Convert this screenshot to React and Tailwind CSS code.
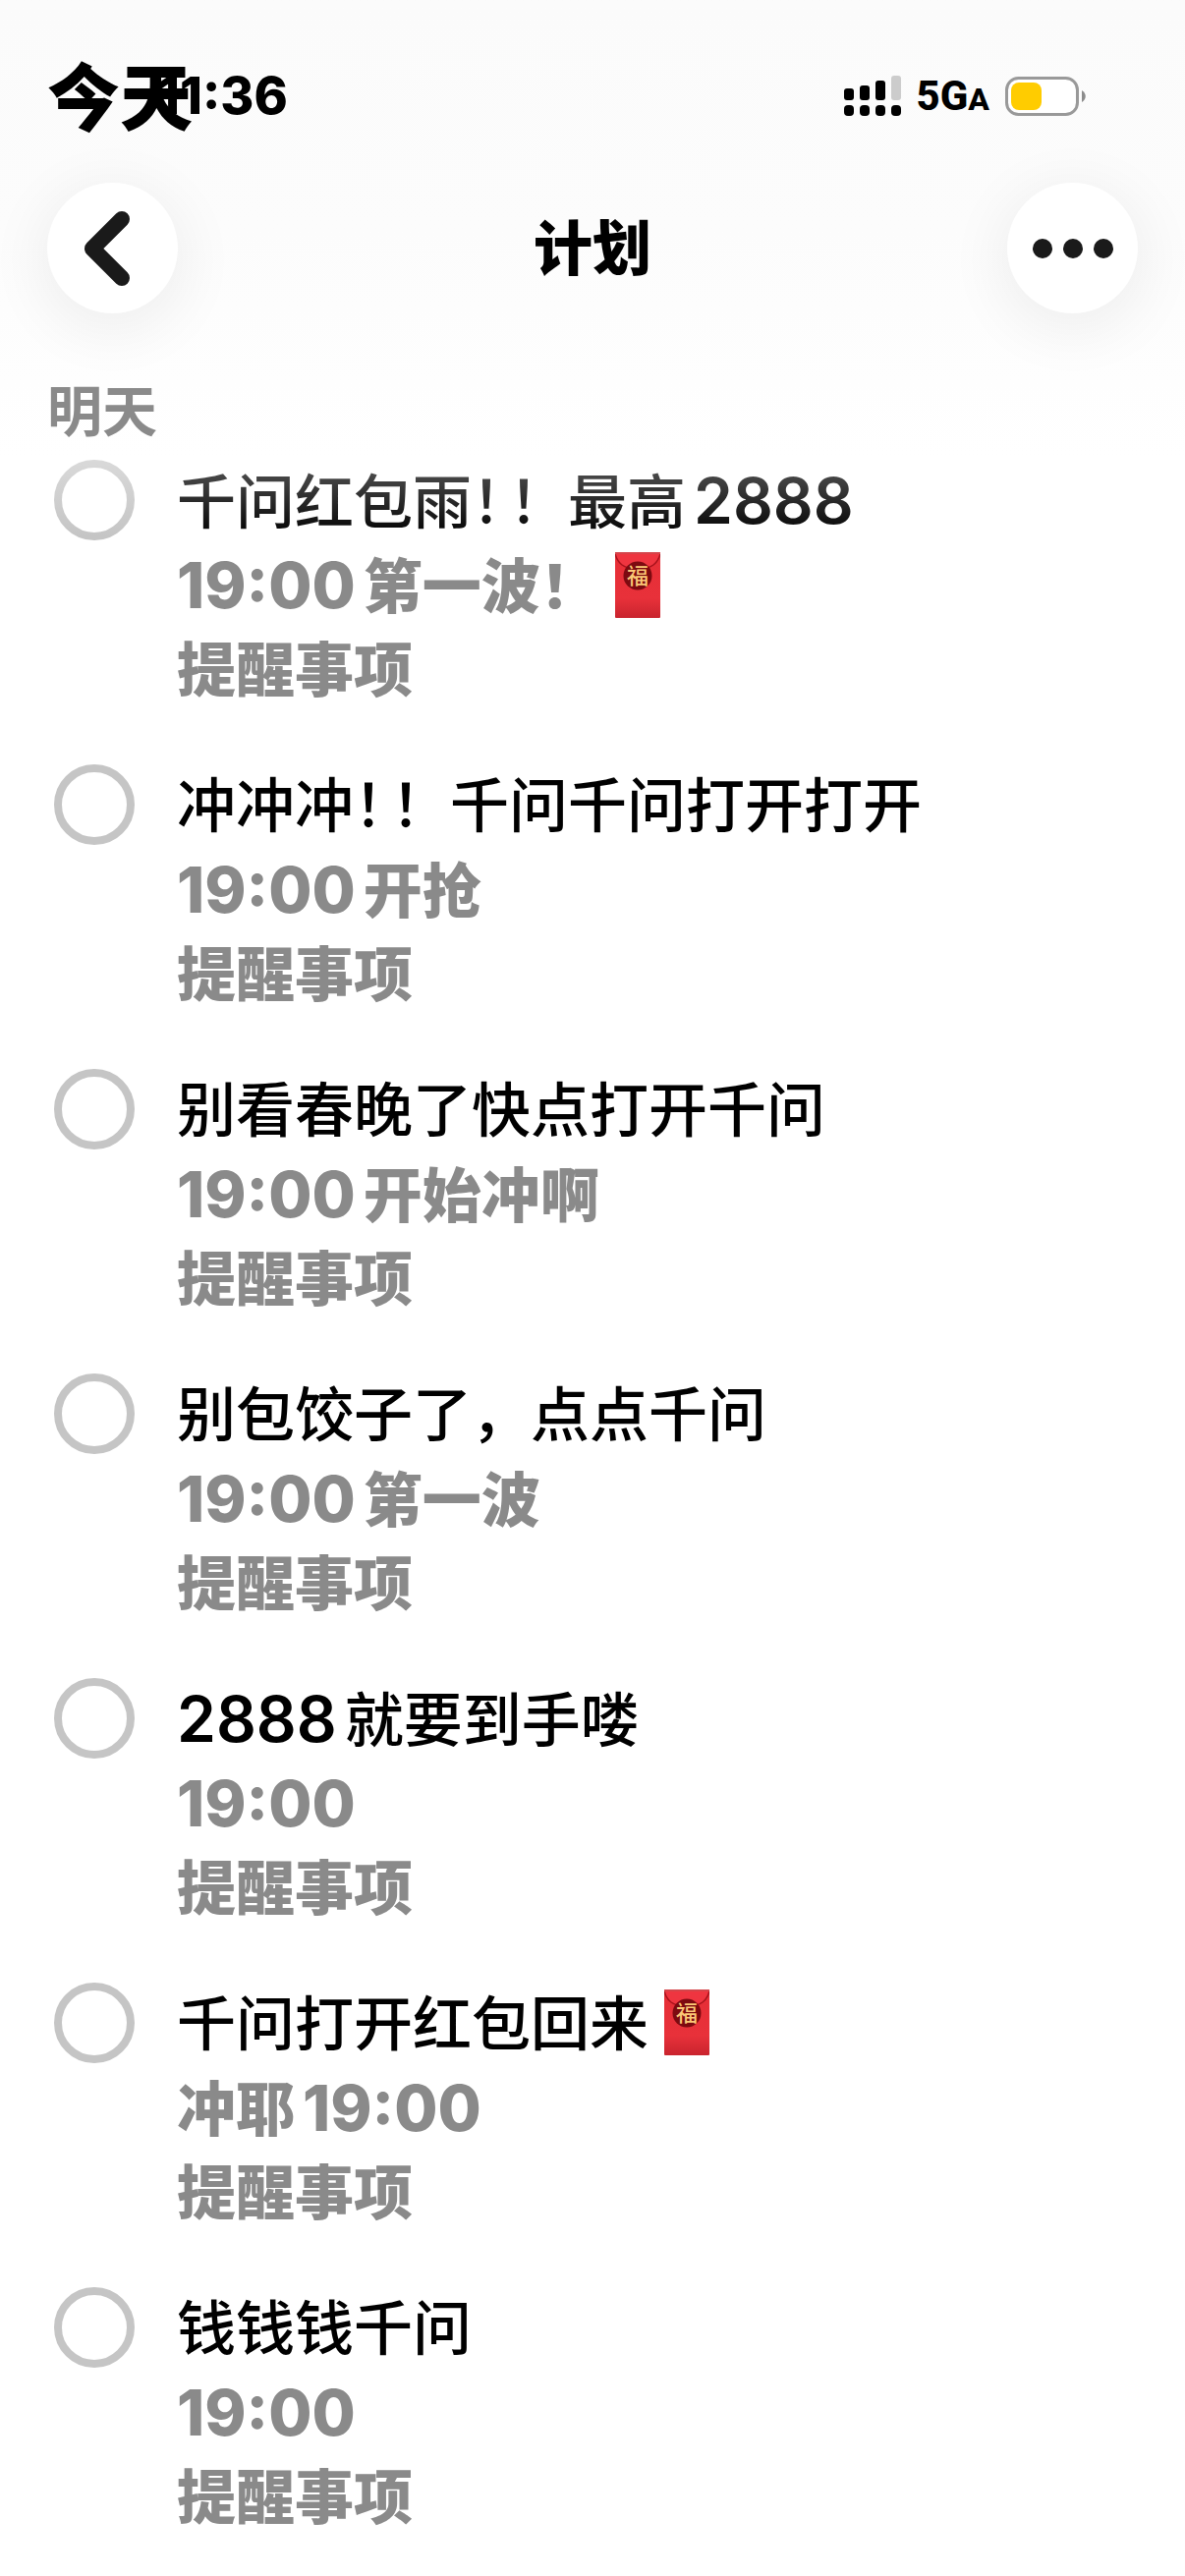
import { useState } from "react";

const reminders = [
  { id: 1, title: "千问红包雨！！最高2888", note: "19:00第一波！🧧" },
  { id: 2, title: "冲冲冲！！千问千问打开打开", note: "19:00开抢" },
  { id: 3, title: "别看春晚了快点打开千问", note: "19:00开始冲啊" },
  { id: 4, title: "别包饺子了，点点千问", note: "19:00第一波" },
  { id: 5, title: "2888就要到手喽", note: "19:00" },
  { id: 6, title: "千问打开红包回来🧧", note: "冲耶19:00" },
  { id: 7, title: "钱钱钱千问", note: "19:00" },
];

const RedEnvelope = () => (
  <svg
    viewBox="0 0 46 67"
    role="img"
    aria-label="红包"
    className="mx-4 inline-block h-[67px] w-[46px] align-[-10px]"
  >
    <defs>
      <linearGradient id="envelope" x1="0" y1="0" x2="0" y2="1">
        <stop offset="0" stopColor="#e62e36" />
        <stop offset="0.7" stopColor="#e8313a" />
        <stop offset="1" stopColor="#c9242e" />
      </linearGradient>
    </defs>
    <rect width="46" height="67" rx="1" fill="url(#envelope)" />
    <path d="M0 2 C3 12 8 16 23 18 C38 16 43 12 46 2" fill="#ef3540" stroke="#a8121b" strokeWidth="1.5" />
    <rect width="46" height="2" fill="#d5444a" />
    <circle cx="23" cy="24" r="14.5" fill="#7d0a10" />
    <text
      x="23"
      y="32"
      textAnchor="middle"
      fontSize="22"
      fontWeight="500"
      fill="#fbc877"
      fontFamily="'Noto Sans CJK SC', sans-serif"
    >
      福
    </text>
  </svg>
);

// digits run a little larger than the Chinese text around them
const MixedText = ({ text }) =>
  text
    .split(/([\d:]+|🧧|！(?=！))/u)
    .filter(Boolean)
    .map((part, index) => {
      if (part === "🧧") return <RedEnvelope key={index} />;
      if (part === "！") {
        return (
          <span key={index} className="mr-2 [font-feature-settings:'halt']">
            {part}
          </span>
        );
      }
      if (/^[\d:]+$/.test(part)) {
        return (
          <span key={index} className={`mx-2 text-[64px] first:ml-0 ${part.includes(":") ? "font-extrabold" : "font-semibold"}`}>
            {part}
          </span>
        );
      }
      return <span key={index}>{part}</span>;
    });

const SignalIcon = () => (
  <svg viewBox="0 0 58 42" className="h-[42px] w-[58px]" aria-hidden="true">
    <rect x="0" y="13" width="10" height="12" rx="3" />
    <rect x="16" y="10" width="10" height="15" rx="3" />
    <rect x="32" y="5" width="10" height="20" rx="3" />
    <rect x="48" y="0" width="10" height="25" rx="3" fill="#cccccc" />
    <rect x="0" y="30" width="10" height="11" rx="4" />
    <rect x="16" y="30" width="10" height="11" rx="4" />
    <rect x="32" y="30" width="10" height="11" rx="4" />
    <rect x="48" y="30" width="10" height="11" rx="4" />
  </svg>
);

const BatteryIcon = () => (
  <svg viewBox="0 0 82 40" className="h-10 w-[82px]" aria-hidden="true">
    <rect x="1.5" y="1.5" width="72" height="37" rx="12" fill="#fff" stroke="#999" strokeWidth="3" />
    <rect x="6" y="6" width="31" height="28" rx="8" fill="#ffcc00" />
    <path d="M78 14 C83 17 83 23 78 26 Z" fill="#8c8c8c" />
  </svg>
);

const StatusBar = () => (
  <div className="relative flex h-16 items-center justify-between pr-[101px] pl-40">
    <span className="text-[52px] leading-none font-extrabold">11:36</span>
    <h1 className="absolute top-0 left-12 text-[74px] leading-[68px] font-black">今天</h1>
    <div className="flex items-center">
      <SignalIcon />
      <span className="ml-4 font-[Roboto,sans-serif] text-[42px] leading-none font-extrabold">
        5G<span className="text-[32px]">A</span>
      </span>
      <span className="ml-4 flex">
        <BatteryIcon />
      </span>
    </div>
  </div>
);

const roundButton =
  "flex size-[133px] items-center justify-center rounded-full bg-white shadow-[0_12px_60px_8px_rgba(0,0,0,0.06)]";

const Header = () => (
  <header className="relative z-10 bg-linear-to-b from-[#fbfbfb] via-[#fcfcfc] to-white pt-[66px]">
    <StatusBar />
    <nav className="mt-14 flex items-center justify-between px-12">
      <button type="button" aria-label="返回" className={roundButton}>
        <svg viewBox="0 0 46 76" className="mr-3 h-[76px] w-[46px]" aria-hidden="true">
          <path
            d="M38 8 L8 38 L38 68"
            fill="none"
            stroke="#1a1a1a"
            strokeWidth="16"
            strokeLinecap="round"
            strokeLinejoin="round"
          />
        </svg>
      </button>
      <h2 className="text-[60px] leading-none font-extrabold">计划</h2>
      <button type="button" aria-label="更多" className={roundButton}>
        <svg viewBox="0 0 82 20" className="h-5 w-[82px]" fill="#1a1a1a" aria-hidden="true">
          <circle cx="10" cy="10" r="10" />
          <circle cx="41" cy="10" r="10" />
          <circle cx="72" cy="10" r="10" />
        </svg>
      </button>
    </nav>
    <h3 className="mt-[68px] px-12 pb-4 text-[56px] leading-[64px] font-bold text-[#8a8a8a]">明天</h3>
    <div className="pointer-events-none absolute inset-x-0 top-full h-20 bg-linear-to-b from-white/35 to-white/0" />
  </header>
);

const ReminderRow = ({ item, done, onToggle }) => (
  <li>
    <label className="flex items-start gap-[43px]">
      <input
        type="checkbox"
        checked={done}
        onChange={onToggle}
        className="mt-px size-[82px] shrink-0 appearance-none rounded-full border-8 border-[#c5c5c5] checked:bg-[#c5c5c5]"
      />
      <span className="block min-w-0 flex-1 text-[60px] leading-[86px] whitespace-nowrap">
        <span className="block h-[86px] font-medium text-black">
          <MixedText text={item.title} />
        </span>
        <span className="block h-[86px] font-extrabold text-[#8a8a8a]">
          <MixedText text={item.note} />
        </span>
        <span className="block h-[86px] font-extrabold text-[#8a8a8a]">提醒事项</span>
      </span>
    </label>
  </li>
);

const App = () => {
  const [done, setDone] = useState([]);

  const toggle = (id) => {
    setDone((prev) => (prev.includes(id) ? prev.filter((d) => d !== id) : [...prev, id]));
  };

  return (
    <div className="min-h-screen overflow-hidden bg-white font-[Inter,'Noto_Sans_CJK_SC',sans-serif] text-black" lang="zh-CN">
      <Header />
      <ul className="flex flex-col gap-[52px] pr-8 pb-8 pl-[55px]">
        {reminders.map((item) => (
          <ReminderRow
            key={item.id}
            item={item}
            done={done.includes(item.id)}
            onToggle={() => toggle(item.id)}
          />
        ))}
      </ul>
    </div>
  );
};

export default App;
